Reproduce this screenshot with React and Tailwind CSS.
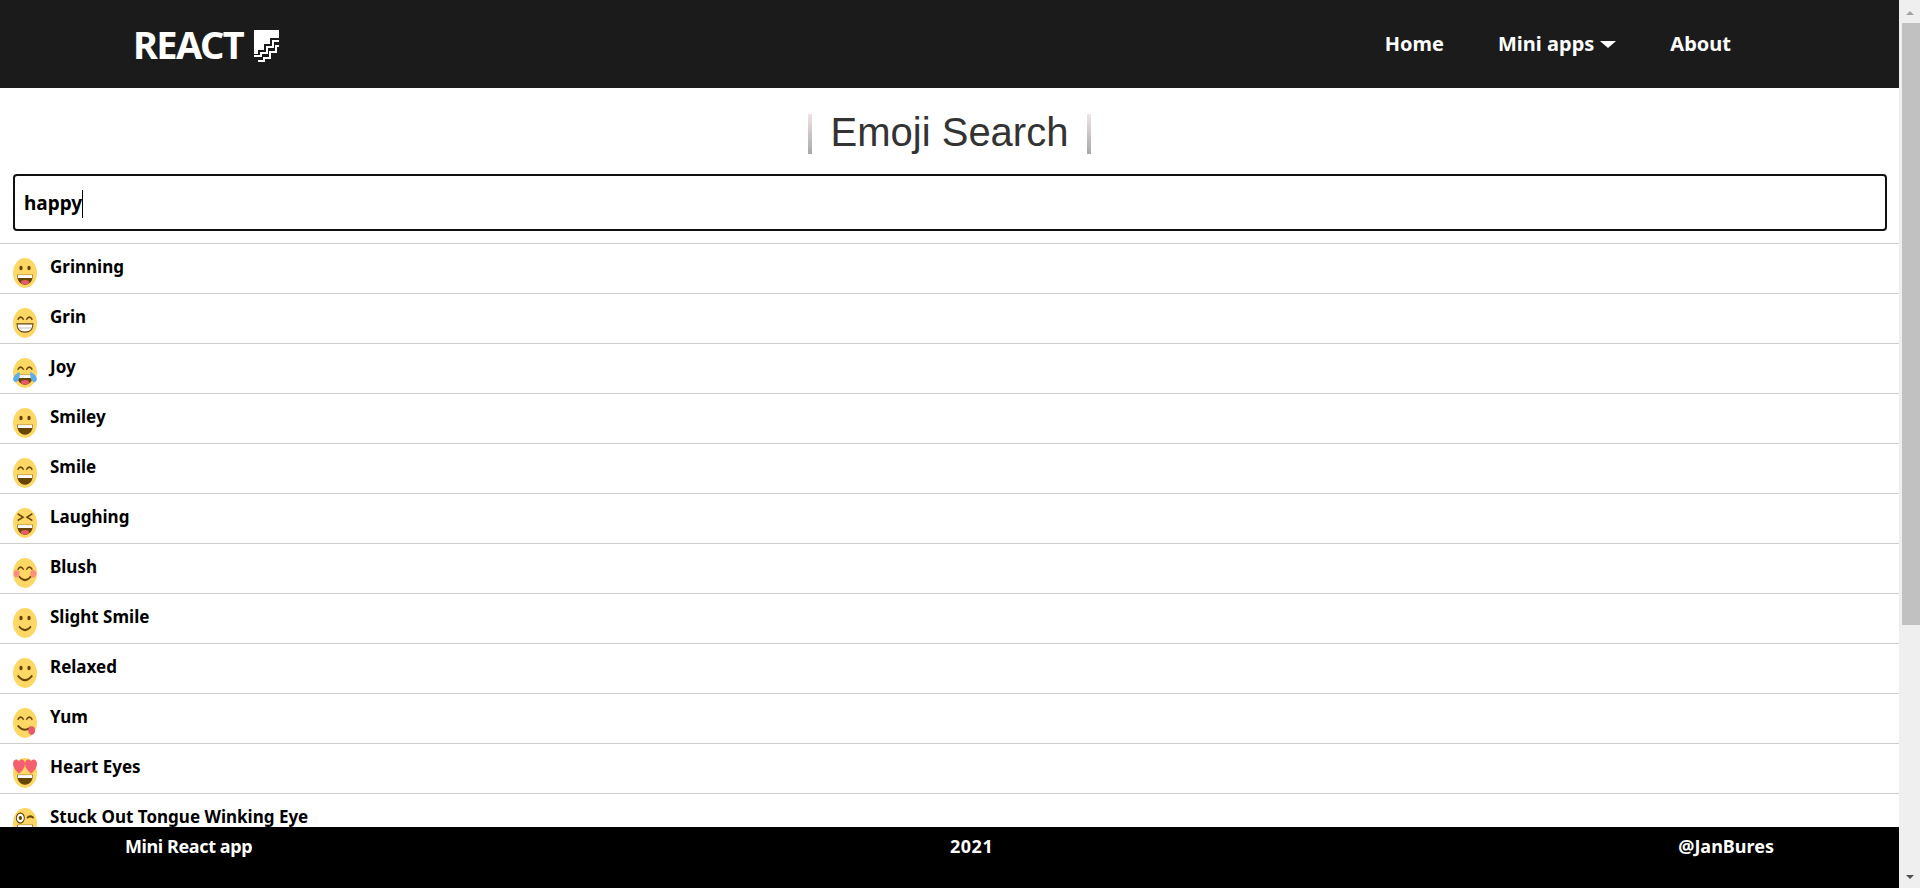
import React from "react";

const FONT = "font-['Noto_Sans','Open_Sans',sans-serif]";

// face shared by all the emoji: stretched twemoji look
function Face({ children }) {
  return (
    <svg viewBox="0 0 36 36" preserveAspectRatio="none" className="w-[24px] h-[30px] shrink-0 mt-[14px]">
      <circle cx="18" cy="18" r="18" fill="#FFD764" />
      {children}
    </svg>
  );
}

const eyes = (
  <>
    <ellipse cx="12" cy="12" rx="2.500" ry="2.800" fill="#664500" />
    <ellipse cx="24" cy="12" rx="2.500" ry="2.800" fill="#664500" />
  </>
);
const happyEyes = (
  <>
    <path d="M7 14q4.500-6 9 0" stroke="#664500" strokeWidth="2" fill="none" />
    <path d="M20 14q4.500-6 9 0" stroke="#664500" strokeWidth="2" fill="none" />
  </>
);
const openMouth = (
  <>
    <path d="M6 20h24c0 7-5 12-12 12S6 27 6 20z" fill="#664500" />
    <path d="M7 20.500h22v3.500H7z" fill="#fff" />
  </>
);
const tongueMouth = (
  <>
    {openMouth}
    <ellipse cx="18" cy="29" rx="6" ry="2.600" fill="#E8596E" />
  </>
);
const smileMouth = <path d="M9 22q9 9 18 0" stroke="#664500" strokeWidth="2.400" fill="none" />;

const ROWS = [
  ["Grinning", <Face>{eyes}{tongueMouth}</Face>],
  ["Grin", <Face>{happyEyes}<path d="M6 19h24c0 6-4 10-12 10S6 25 6 19z" fill="#fff" stroke="#664500" strokeWidth="1.500" /><path d="M6 24h24" stroke="#aaa" strokeWidth="1" /></Face>],
  ["Joy", <Face>{happyEyes}{tongueMouth}<path d="M0 26c1-6 6-8 10-9 1 5-1 12-7 12z" fill="#5DADEC" /><path d="M36 26c-1-6-6-8-10-9-1 5 1 12 7 12z" fill="#5DADEC" /></Face>],
  ["Smiley", <Face>{eyes}{openMouth}</Face>],
  ["Smile", <Face>{happyEyes}{openMouth}</Face>],
  ["Laughing", <Face><path d="M7 7l8 4-8 4M29 7l-8 4 8 4" stroke="#664500" strokeWidth="2" fill="none" />{tongueMouth}</Face>],
  ["Blush", <Face>{happyEyes}<circle cx="5.500" cy="19" r="4.500" fill="#FF7C80" opacity="0.8" /><circle cx="30.500" cy="19" r="4.500" fill="#FF7C80" opacity="0.8" />{smileMouth}</Face>],
  ["Slight Smile", <Face>{eyes}{smileMouth}</Face>],
  ["Relaxed", <Face>{eyes}<path d="M7 21q11 11 22 0" stroke="#664500" strokeWidth="2.400" fill="none" /></Face>],
  ["Yum", <Face>{happyEyes}<path d="M7 21q10 9 20 2" stroke="#664500" strokeWidth="2.400" fill="none" /><ellipse cx="28" cy="27" rx="5" ry="5" fill="#E8596E" /></Face>],
  ["Heart Eyes", <Face><path d="M9 19C3 15 0 11 0 7c0-5 6-7 9-3 3-4 9-2 9 3 0 4-3 8-9 12z" fill="#F4606F" /><path d="M27 19c-6-4-9-8-9-12 0-5 6-7 9-3 3-4 9-2 9 3 0 4-3 8-9 12z" fill="#F4606F" />{openMouth}</Face>],
  ["Stuck Out Tongue Winking Eye", <Face><circle cx="11" cy="12" r="6" fill="#fff" stroke="#664500" strokeWidth="1.500" /><circle cx="11" cy="12" r="2.500" fill="#664500" /><path d="M21 12q5-4 10 0" stroke="#664500" strokeWidth="2.500" fill="none" />{openMouth}</Face>],
];

// the stair logo next to REACT
function Stairs() {
  return (
    <svg viewBox="0 0 25 32" className="w-[25px] h-[32px] ml-[11px] mt-[4px] shrink-0">
      <path d="M0 0h25v8h-9v6h-6v6H4v4H0z" fill="#fff" />
      <path d="M25 11h-6v6h-6v6H7v3H0" stroke="#fff" strokeWidth="2" fill="none" />
      <path d="M25 16h-3v6h-6v6h-6v3H4" stroke="#fff" strokeWidth="2" fill="none" />
    </svg>
  );
}

function Scrollbar() {
  return (
    <div className="w-[21px] shrink-0 bg-[#efefef] flex flex-col">
      <div className="h-[23px] pt-[3px] flex items-center justify-center">
        <div className="w-0 h-0 border-x-[4px] border-x-transparent border-b-[4px] border-b-[#a3a3a3]"></div>
      </div>
      <div className="w-[18px] h-[602px] self-end bg-[#c1c1c1]"></div>
      <div className="mt-auto h-[22px] flex items-center justify-center">
        <div className="w-0 h-0 border-x-[4px] border-x-transparent border-t-[4px] border-t-[#505050]"></div>
      </div>
    </div>
  );
}

export default function App() {
  return (
    <div className={`h-[888px] flex overflow-hidden bg-white ${FONT}`}>
      <div className="flex-1 min-w-0 flex flex-col">
        {/* Navbar */}
        <nav className="h-[88px] shrink-0 bg-[#1c1b1b] text-white flex items-center pl-[133px] pr-[168px]">
          <div className="flex items-center text-[38px] font-bold leading-none tracking-[-1.6px]">
            REACT
            <Stairs />
          </div>
          <ul className="ml-auto flex items-center gap-[54px] text-[20px] font-bold">
            <li>Home</li>
            <li className="flex items-center gap-[6px]">
              Mini apps
              <span className="w-0 h-0 border-x-[8px] border-x-transparent border-t-[7px] border-t-white"></span>
            </li>
            <li>About</li>
          </ul>
        </nav>

        {/* Main */}
        <main className="flex-1 min-h-0 overflow-hidden">
          <div className="flex items-center justify-center h-[86px] pt-[2px] text-[40px] text-[#333] font-['Liberation_Sans',Arial,sans-serif]">
            <span className="w-[4px] h-[40px] mt-[4px] mr-[19px] bg-gradient-to-b from-[#f2e4e4] to-[#a8a8a8]"></span>
            Emoji Search
            <span className="w-[4px] h-[40px] mt-[4px] ml-[19px] bg-gradient-to-b from-[#f2e4e4] to-[#a8a8a8]"></span>
          </div>
          <div className="pl-[13px] pr-[12px] pb-[12px]">
            <div className="h-[57px] pt-[2px] border-2 border-[#111] rounded-[4px] flex items-center pl-[9px] text-[19px] font-bold text-black">
              happy
              <span className="w-px h-[28px] bg-black"></span>
            </div>
          </div>
          <div className="border-t border-[#ccc]">
            {ROWS.map(([title, icon]) => (
              <div key={title} className="h-[50px] border-b border-[#ccc] flex items-start pl-[13px] gap-[13px]">
                {icon}
                <span className="text-[17px] font-bold text-black leading-[22px] mt-[12px]">{title}</span>
              </div>
            ))}
          </div>
        </main>

        {/* Footer */}
        <footer className="h-[61px] shrink-0 bg-black text-white text-[18px] font-bold flex items-start pt-[6px] pl-[125px] pr-[125px]">
          <span className="w-[825px] tracking-[-0.4px]">Mini React app</span>
          <span className="tracking-[0.5px]">2021</span>
          <span className="ml-auto">@JanBures</span>
        </footer>
      </div>
      <Scrollbar />
    </div>
  );
}
